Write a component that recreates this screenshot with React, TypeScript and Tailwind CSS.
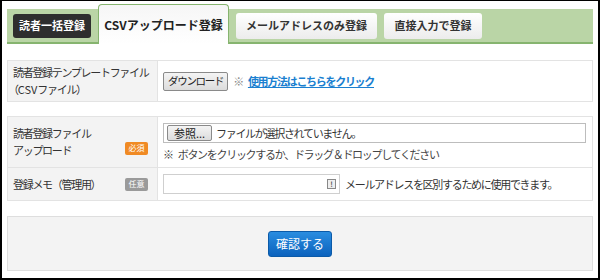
import React from "react";

const font = { fontFamily: '"Noto Sans CJK JP", "Noto Sans", sans-serif' };

function Badge({ kind }: { kind: "req" | "opt" }) {
  return kind === "req" ? (
    <span className="inline-flex h-[13px] w-[23px] items-center justify-center rounded-[2px] bg-[#f08a24] text-[8px] leading-none tracking-normal text-white">
      必須
    </span>
  ) : (
    <span className="inline-flex h-[13px] w-[23px] items-center justify-center rounded-[2px] bg-[#9a9a9a] text-[8px] leading-none tracking-normal text-white">
      任意
    </span>
  );
}

export default function App() {
  return (
    <div
      className="h-[280px] w-[600px] overflow-hidden border-x-2 border-b-2 border-t border-black bg-white px-[5px] pt-[5px] text-[11px] tracking-[-1.3px] text-[#333]"
      style={font}
    >
      {/* Tabs */}
      <div className="mt-[3px] flex h-[35px] items-center gap-[7px] border-b-2 border-[#86b46f] bg-[#bad5a6] pl-[6px] tracking-normal">
        <div className="flex h-[24px] w-[78px] items-center justify-center rounded-[3px] bg-[#2e2e2e] text-[11px] font-bold text-white">
          読者一括登録
        </div>
        <div className="-mb-[2px] -mt-[5px] flex h-[40px] w-[131px] items-center justify-center self-end rounded-t-[4px] border-x border-t border-[#86b46f] bg-gradient-to-b from-[#f6f6f6] to-white text-[12px] font-bold text-[#222]">
          CSVアップロード登録
        </div>
        <div className="flex h-[26px] w-[141px] items-center justify-center rounded-[3px] bg-gradient-to-b from-white to-[#ececec] text-[11px] font-bold text-[#333]">
          メールアドレスのみ登録
        </div>
        <div className="flex h-[26px] w-[98px] items-center justify-center rounded-[3px] bg-gradient-to-b from-white to-[#ececec] text-[11px] font-bold text-[#333]">
          直接入力で登録
        </div>
      </div>

      {/* Template download */}
      <div className="mt-[16px] flex h-[42px] border border-[#e3e3e3]">
        <div className="flex w-[150px] flex-col justify-center border-r border-[#e3e3e3] bg-[#f3f3f3] pl-[5px] leading-[17px]">
          <span>読者登録テンプレートファイル</span>
          <span className="-ml-[5px]">
            （<span className="tracking-normal">CSV</span>ファイル）
          </span>
        </div>
        <div className="flex flex-1 items-center pl-[5px]">
          <button className="h-[19px] rounded-[2px] border border-[#8a8a8a] bg-gradient-to-b from-[#f4f4f4] to-[#dcdcdc] px-[4px] text-[10.5px] leading-none text-[#222]">
            ダウンロード
          </button>
          <span className="ml-[5px] text-[#888]">※</span>
          <a className="ml-[5px] font-bold text-[#1a7fd0] underline">使用方法はこちらをクリック</a>
        </div>
      </div>

      {/* Upload + memo */}
      <div className="mt-[14px] border border-[#e3e3e3]">
        <div className="flex h-[51px] border-b border-[#e3e3e3]">
          <div className="flex w-[150px] items-center justify-between border-r border-[#e3e3e3] bg-[#f3f3f3] pl-[5px] pr-[9px]">
            <div className="flex flex-col leading-[17px]">
              <span>読者登録ファイル</span>
              <span>アップロード</span>
            </div>
            <div className="mt-[9px]">
              <Badge kind="req" />
            </div>
          </div>
          <div className="flex flex-1 flex-col pl-[5px] pr-[6px] pt-[6px]">
            <div className="flex h-[20px] items-center border border-[#bdbdbd] pl-[3px]">
              <button className="h-[16px] w-[45px] rounded-[2px] border border-[#8a8a8a] bg-gradient-to-b from-[#f4f4f4] to-[#dcdcdc] leading-none tracking-normal text-[#222]">
                参照...
              </button>
              <span className="ml-[4px] text-[#333]">ファイルが選択されていません。</span>
            </div>
            <div className="mt-[3px] flex text-[#444]">
              <span className="mr-[5px]">※</span>
              <span>ボタンをクリックするか、ドラッグ＆ドロップしてください</span>
            </div>
          </div>
        </div>
        <div className="flex h-[32px]">
          <div className="flex w-[150px] items-center justify-between border-r border-[#e3e3e3] bg-[#f3f3f3] pl-[5px] pr-[9px]">
            <span>登録メモ（管理用）</span>
            <Badge kind="opt" />
          </div>
          <div className="flex flex-1 items-center pl-[5px]">
            <div className="flex h-[20px] w-[177px] items-center justify-end border border-[#cfcfcf] pr-[3px]">
              <span className="flex h-[10px] w-[9px] items-center justify-center border border-[#888] bg-[#eee] text-[7px] font-bold leading-none tracking-normal text-[#555]">
                !
              </span>
            </div>
            <span className="ml-[5px] text-[#333]">メールアドレスを区別するために使用できます。</span>
          </div>
        </div>
      </div>

      {/* Submit */}
      <div className="mt-[15px] flex h-[55px] items-center justify-center border border-[#dedede] bg-[#f3f3f3]">
        <button className="h-[26px] w-[64px] rounded-[3px] border border-[#0b5aa8] bg-gradient-to-b from-[#2a8de0] to-[#0b62bd] text-[12px] tracking-normal text-white">
          確認する
        </button>
      </div>
    </div>
  );
}
